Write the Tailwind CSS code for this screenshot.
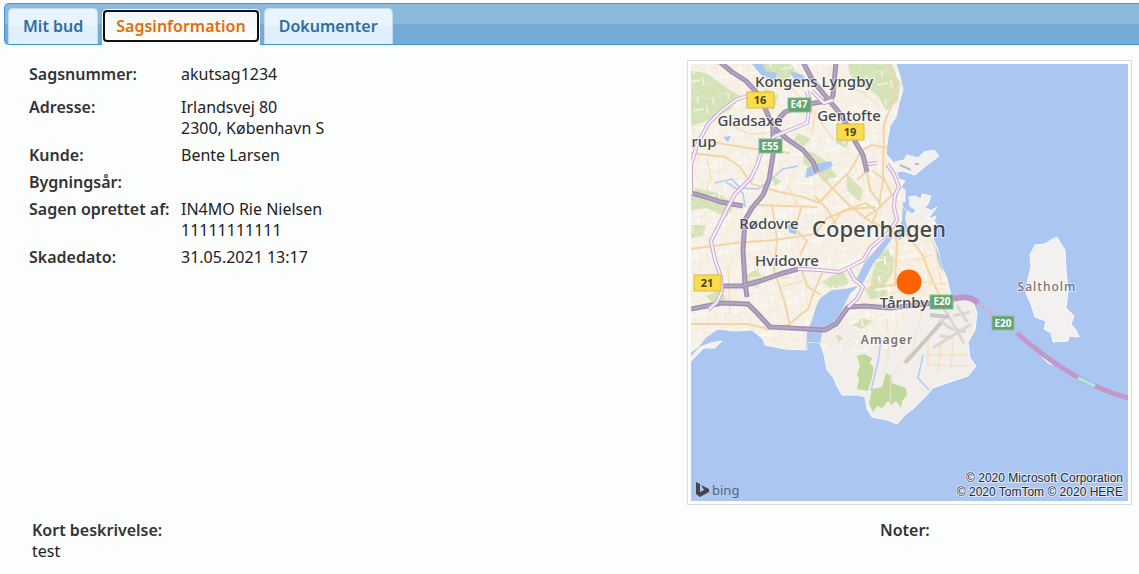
<!DOCTYPE html>
<html lang="da">

<head>
    <meta charset="UTF-8">
    <meta name="viewport" content="width=device-width, initial-scale=1.0">
    <title>Sagsinformation</title>
    <script src="https://cdn.jsdelivr.net/npm/@tailwindcss/browser@4"></script>
</head>

<body class="bg-[#fcfdfd] font-['Noto_Sans',sans-serif] text-[16px] leading-[21px] text-[#222] overflow-x-hidden">
    <nav class="ml-1 mt-[3px] h-[42px] flex items-end gap-[4px] pl-[3px] rounded-l-[5px] border border-r-0 border-[#4297d7] bg-linear-to-b from-[#8db9dd] from-50% to-[#74acd7] to-50% font-semibold text-[#2e6e9e]">
        <a href="#bud" class="h-[36px] px-[14px] flex items-center rounded-t-[5px] border border-b-0 border-[#c5dbec] bg-linear-to-b from-[#e8f4fe] from-50% to-[#dfeffc] to-50%">Mit bud</a>
        <a href="#sag" aria-current="page" class="h-[36px] -mb-px px-px pb-[3px] pt-px flex bg-[#fcfdfd] rounded-t-[5px] text-[#e17009]">
            <span class="h-[32px] px-[11px] flex items-center rounded-[4px] border-2 border-[#101010] bg-linear-to-b from-[#f3f6f7] to-[#fcfdfd]">Sagsinformation</span>
        </a>
        <a href="#dok" class="h-[36px] px-[14px] flex items-center rounded-t-[5px] border border-b-0 border-[#c5dbec] bg-linear-to-b from-[#e8f4fe] from-50% to-[#dfeffc] to-50%">Dokumenter</a>
    </nav>

    <main>
        <div class="flex justify-between items-start pt-[15px] pl-[29px] pr-[7px]">
            <dl class="pt-1 grid grid-cols-[152px_auto] gap-y-[6px] [&>dt]:font-semibold [&>dt]:text-[#333] [&>dt]:whitespace-nowrap">
                <dt class="pb-[6px]">Sagsnummer:</dt>
                <dd>akutsag1234</dd>
                <dt>Adresse:</dt>
                <dd>Irlandsvej 80<br>2300, København S</dd>
                <dt>Kunde:</dt>
                <dd>Bente Larsen</dd>
                <dt>Bygningsår:</dt>
                <dd></dd>
                <dt>Sagen oprettet af:</dt>
                <dd>IN4MO Rie Nielsen<br>11111111111</dd>
                <dt>Skadedato:</dt>
                <dd>31.05.2021 13:17</dd>
            </dl>

            <div class="shrink-0 p-[3px] border border-[#d8dcdf] bg-white">
                <svg class="block w-[437px] h-[437px]" viewBox="691 64 437 437" role="img" aria-label="Copenhagen" font-family="Noto Sans, sans-serif">
                    <defs>
                        <path id="mainland" d="M691 64H896L900 76L903 90L899 103L896 117L890 126L887 143L886 154L893 162L898 176L900 190L903 208L912 214L921 207L931 210L929 218L936 223L933 239L938 250L941 264L947 279L951 296L960 300L973 302L977 313L975 330L968 342L970 358L976 366L968 376L950 382L933 388L924 398L914 408L906 414L897 424L887 420L872 417L867 409L865 397L858 395L842 395L837 386L833 377L827 370L824 354L820 343L808 342L807 350L785 349L765 345L763 339L752 330L735 331L718 329L706 337L698 347L691 352Z"/>
                        <clipPath id="land"><use href="#mainland"/></clipPath>
                        <pattern id="streets" width="31" height="29" patternUnits="userSpaceOnUse" patternTransform="rotate(-8)">
                            <path d="M0 8H13V0M13 8L18 19H31M18 19V29M0 22H18M24 0V12L31 14M6 8V16L0 18" fill="none" stroke="#f6e2c9" stroke-width="1"/>
                            <path d="M3 0V8M20 3H31M10 22V29M26 19V25" fill="none" stroke="#fff" stroke-width="1.5"/>
                        </pattern>
                    </defs>

                    <!-- sea and land -->
                    <rect x="691" y="64" width="437" height="437" fill="#abc7f1"/>
                    <use href="#mainland" fill="#f2efeb" stroke="#f9fafa" stroke-width="1"/>
                    <g fill="#f2f1ef" stroke="#f9fafa">
                        <path d="M895 162L904 160L907 155L918 158L924 152L934 150L939 156L927 165L915 175L903 171L895 172Z"/>
                        <path d="M909 197L915 196L921 199L922 194L931 196L928 204L920 213L910 206Z"/>
                        <path d="M931 211L937 207L927 220L936 216L932 226L922 224Z"/>
                        <path d="M899 179L905 181L901 187L905 190V202L898 199Z"/>
                        <path d="M1057 237L1061 244L1065 250L1066 270L1068 291L1066 308L1074 316L1071 324L1076 330L1079 337L1069 336L1068 341L1053 342L1051 333L1044 329L1046 321L1035 317L1031 304L1026 293L1028 279L1031 267L1030 255L1035 245L1045 244L1051 240Z"/>
                        <path d="M691 357L700 347L711 343L722 341L715 348L704 348L691 361Z"/>
                        <path d="M1042 357L1052 365L1047 362Z"/>
                    </g>
                    <path d="M900 165L911 170M915 164H919" stroke="#b9bdbd" stroke-width="2"/>

                    <g clip-path="url(#land)">
                        <path d="M691 64H903V345H865L832 291L808 350H691Z" fill="#f6f2e9"/>
                        <path d="M864 240L920 218L946 275L948 308H864Z" fill="#f8f0e2"/>
                        <!-- parks -->
                        <g fill="#d3e3b8">
                            <path d="M691 70L708 74L728 89L741 96L730 110L704 122L691 126Z"/>
                            <path d="M760 64H790L798 72L779 83L764 78Z"/>
                            <path d="M848 64H892L900 83L898 101L886 110L878 96L863 86L851 78Z"/>
                            <path d="M691 187L718 193L735 205L727 217L706 208L691 210Z"/>
                            <path d="M804 150L814 153L829 163L837 177L825 182L813 170L803 163Z"/>
                            <path d="M847 174L863 190L860 202L847 190Z"/>
                            <path d="M877 255L888 249L894 259L893 272L883 288L870 285Z"/>
                            <path d="M864 288L884 285L888 295L870 300Z"/>
                            <path d="M745 276L755 270L765 276L757 288L747 283Z"/>
                            <path d="M691 225H706L703 236L691 238ZM706 296L720 290L728 300L711 302Z"/>
                            <path d="M822 282L842 270L850 283L832 289Z"/>
                            <path d="M765 88L778 95L775 106L761 101ZM798 133L811 139L804 146L793 141Z"/>
                            <path d="M838 133L850 139L846 148L836 143ZM771 175L781 181L775 187Z"/>
                            <path d="M853 325L861 318L872 321L862 329ZM837 334L843 338L838 343Z"/>
                        </g>
                        <rect x="691" y="64" width="212" height="288" fill="url(#streets)" opacity=".7"/>
                        <path d="M866 245L939 220L950 310H866Z" fill="url(#streets)" opacity=".7"/>
                        <g fill="#bfd99c">
                            <path d="M857 356L864 354L872 358L870 363L874 368L872 378L868 391L857 389L859 380L857 374L860 366Z"/>
                            <path d="M872 389L882 387L884 380L886 373L891 376L892 383L906 388L907 395L902 401L901 408L896 401L891 405L888 401L882 408L877 406L873 412L869 404Z"/>
                        </g>
                        <!-- lakes, harbour and inlet -->
                        <g fill="#abc7f1">
                            <path d="M752 64H763L766 71L777 73L775 80L761 75ZM790 71L803 75L806 81L795 81Z"/>
                            <path d="M807 168L820 163L831 161L833 166L820 173L805 178Z"/>
                            <path d="M723 137L731 136L728 142ZM788 225L797 221L796 235L789 232Z"/>
                            <path d="M820 345L822 333L832 325L842 310L850 294L858 286L845 289L832 290L820 298L816 307L812 320L807 333L806 351Z"/>
                            <path d="M856 280L865 262L878 247L889 235L893 237L884 250L873 264L862 285Z"/>
                            <path d="M903 195L908 204L905 218L908 230L900 240L896 237L902 220Z"/>
                            <path d="M707 340L722 334L744 335L752 345L728 349L712 348Z"/>
                            <path d="M935 245L943 263L948 266L942 271L937 258Z"/>
                        </g>
                        <g fill="none" stroke="#b4cbee" stroke-width="1.5">
                            <path d="M715 183L732 179L740 188L758 189L773 178L783 169L798 166M726 182L743 193L745 207"/>
                            <path d="M881 340L878 362L871 391M923 355L918 378L929 390"/>
                        </g>

                        <!-- secondary roads -->
                        <g fill="none" stroke="#f3d5a5" stroke-width="2">
                            <path d="M691 153L725 157L739 166L752 184L780 192L803 197L819 203L832 189L850 171L862 150L872 145L888 148"/>
                            <path d="M711 142L748 148L790 153M888 64L896 83L892 104L884 124L883 180L879 205"/>
                            <path d="M691 249L735 243L774 240L815 234L827 218L850 209L875 207M758 205L817 207"/>
                            <path d="M772 205L777 240L774 270L784 300L790 326M802 205L795 229L807 241L800 255M790 327L764 328L748 324L691 324"/>
                            <path d="M817 171L833 189L850 206L871 222L889 229M857 180L867 171L870 190L882 206"/>
                            <path d="M822 273L814 292L808 309L788 325L765 330M801 268L807 286L821 295"/>
                            <path d="M892 230L897 241L895 285L870 287M870 229L877 212L866 203L842 211L833 224"/>
                            <path d="M872 171L884 179L892 195L878 209L864 218M815 196L828 210L836 226"/>
                            <path d="M903 230L922 254L932 280L944 304"/>
                        </g>
                        <g fill="none" stroke="#f6e1ba" stroke-width="1.5">
                            <path d="M790 87L815 112L812 135M845 85L862 92L879 106M707 158L711 178L705 194M725 122L749 134L767 133"/>
                            <path d="M820 121L833 139L850 140M787 185L799 207M755 256L760 280L790 277M781 287L803 281M728 265L730 315"/>
                            <path d="M914 232L925 224L935 248L942 285M913 260L933 255M905 290L923 282L946 284"/>
                            <path d="M928 340V365L968 366M941 342L938 372M953 341L951 369M925 355H968"/>
                        </g>
                        <path d="M925 302L920 320L912 350L891 376L890 405M887 318L889 350L885 372" fill="none" stroke="#f5dccb"/>

                        <!-- airport -->
                        <g fill="none" stroke="#ddd6d5" stroke-width="3">
                            <path d="M907 361L949 313M933 348L971 324M939 320L950 328L966 332M944 309L951 320L964 343M953 316L970 312M957 305L967 322M940 336L953 338"/>
                        </g>
                        <path d="M905 363L941 323M930 315L949 317" fill="none" stroke="#cdc6c5" stroke-width="4"/>
                    </g>

                    <!-- motorways -->
                    <g fill="none" stroke="#a08fb1" stroke-width="5" stroke-linejoin="round">
                        <path id="m1" d="M720 62L732 72L746 81L758 94L765 108L773 127L787 139L803 150L813 162L817 172"/>
                        <path id="m2" d="M773 127V155L769 180L763 195L752 208L745 220L743 250L745 283L747 297"/>
                        <path id="m3" d="M776 122L785 112L803 105L827 101M803 62L813 81L827 98L838 111L847 125L856 143L863 155L867 172M836 62L833 95L830 102"/>
                        <path id="m4" d="M691 193L706 197L721 202L743 206"/>
                        <path id="m5" d="M691 309L722 303L748 304L757 313L770 327L790 328L825 330L836 324L848 307L865 306L890 308L933 303"/>
                        <path id="m6" d="M722 286L742 286L760 281L780 274L798 269"/>
                    </g>
                    <g fill="none" stroke="#b5a6c2" stroke-width="2">
                        <use href="#m1"/><use href="#m2"/><use href="#m3"/><use href="#m4"/><use href="#m5"/><use href="#m6"/>
                    </g>
                    <g fill="none" stroke="#c6abd3" stroke-width="4" stroke-linejoin="round">
                        <path id="p1" d="M691 195V165L697 145L708 124L721 111L736 100L752 94"/>
                        <path id="p2" d="M807 91L810 105L807 123L792 129L775 136L762 148L758 163L751 178L735 194L727 209L719 225L711 241L715 260L721 277L722 291L717 302L708 310"/>
                        <path id="p3" d="M798 269L820 270L839 272L852 266L863 260L871 247L888 233L897 220L894 207L895 195L899 187L894 174L887 164M848 268L854 279L863 287L857 299L848 307"/>
                        <path id="p4" d="M812 91L824 103L833 100M868 164L877 163"/>
                    </g>
                    <g fill="none" stroke="#fbf0fa" stroke-width="2">
                        <use href="#p1"/><use href="#p2"/><use href="#p3"/><use href="#p4"/>
                    </g>

                    <!-- Øresund bridge -->
                    <path d="M953 299Q969 294 978 303" fill="none" stroke="#bd95c8" stroke-width="6"/>
                    <path d="M978 303L996 318" fill="none" stroke="#c9b2da" stroke-width="5" stroke-dasharray="3 2"/>
                    <path d="M1017 333Q1073 383 1128 398" fill="none" stroke="#c199cb" stroke-width="5"/>
                    <path d="M1078 378L1095 386" stroke="#9bcfd5" stroke-width="5"/>
                    <path d="M1078 378L1095 386" stroke="#bce7df" stroke-width="2"/>

                    <!-- road shields -->
                    <g font-size="11" font-weight="bold" text-anchor="middle" fill="#4b421c">
                        <g fill="#fbdc4d" stroke="#d8ba39">
                            <rect x="747" y="92" width="27" height="16"/>
                            <rect x="837" y="124" width="27" height="16"/>
                            <rect x="694" y="275" width="27" height="16"/>
                        </g>
                        <text x="760" y="104">16</text>
                        <text x="850" y="136">19</text>
                        <text x="707" y="287">21</text>
                    </g>
                    <g font-size="10" font-weight="bold" text-anchor="middle" fill="#fff">
                        <g fill="#63a374" stroke="#8dbd98">
                            <rect x="788" y="98" width="23" height="14"/>
                            <rect x="759" y="139" width="23" height="14"/>
                            <rect x="930" y="295" width="23" height="14"/>
                            <rect x="992" y="316" width="22" height="14"/>
                        </g>
                        <text x="799" y="108">E47</text>
                        <text x="770" y="150">E55</text>
                        <text x="942" y="305">E20</text>
                        <text x="1003" y="327">E20</text>
                    </g>

                    <!-- place names -->
                    <g font-size="15" font-weight="500" fill="#45484b" stroke="#fff" stroke-opacity=".6" stroke-width="2" paint-order="stroke" text-anchor="middle">
                        <text x="814" y="87">Kongens Lyngby</text>
                        <text x="750" y="126">Gladsaxe</text>
                        <text x="849" y="121">Gentofte</text>
                        <text x="704" y="147">rup</text>
                        <text x="769" y="229">Rødovre</text>
                        <text x="787" y="266">Hvidovre</text>
                        <text x="904" y="308">Tårnby</text>
                        <text x="879" y="237" font-size="22">Copenhagen</text>
                    </g>
                    <g font-size="12" fill="#76736f" stroke="#fff" stroke-opacity=".5" stroke-width="2" paint-order="stroke" text-anchor="middle" letter-spacing="1">
                        <text x="887" y="344" font-weight="600">Amager</text>
                        <text x="1047" y="291" font-weight="500">Saltholm</text>
                    </g>

                    <circle cx="909" cy="282" r="12.5" fill="#ff6200"/>

                    <!-- bing logo -->
                    <path d="M696 482L700 484V492L704 490L701 485L709 489V492L700 497L696 494Z" fill="#45474d"/>
                    <text x="712" y="495" font-size="13" fill="#596579">bing</text>
                    <g font-family="Liberation Sans, Arial, sans-serif" font-size="12" fill="#252a30" stroke="#fff" stroke-opacity=".6" stroke-width="2" paint-order="stroke" text-anchor="end">
                        <text x="1123" y="482">© 2020 Microsoft Corporation</text>
                        <text x="1123" y="496">© 2020 TomTom © 2020 HERE</text>
                    </g>
                </svg>
            </div>
        </div>

        <div class="flex justify-between pt-[15px] pl-8">
            <section>
                <h2 class="font-semibold text-[#333]">Kort beskrivelse:</h2>
                <p>test</p>
            </section>
            <section class="w-[259px]">
                <h2 class="font-semibold text-[#333]">Noter:</h2>
            </section>
        </div>
    </main>
</body>

</html>
